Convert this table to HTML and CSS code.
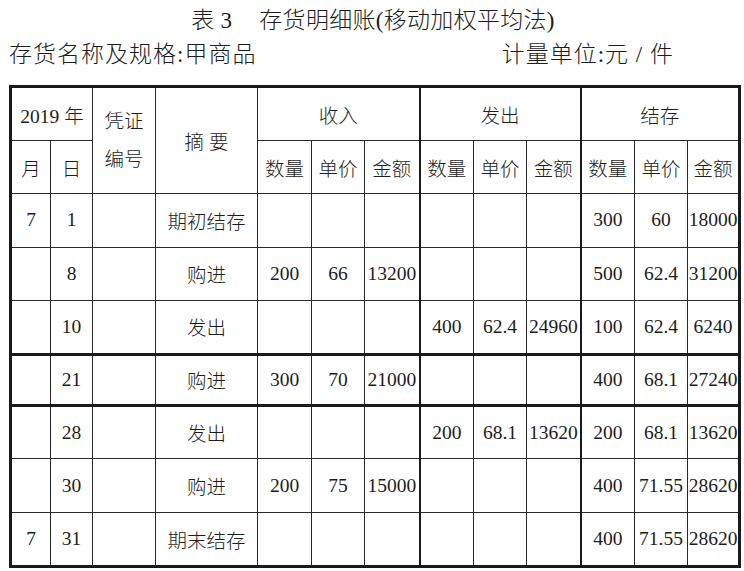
FILE: index.html
```html
<!DOCTYPE html>
<html lang="zh-CN">
<head>
<meta charset="utf-8">
<title>存货明细账</title>
<link rel="stylesheet" href="styles.css">
</head>
<body>
<div class="page">
  <h1 class="title"><span class="tno">表 3</span>存货明细账(移动加权平均法)</h1>
  <div class="info">
    <span>存货名称及规格:甲商品</span>
    <span>计量单位:元 / 件</span>
  </div>
  <table class="ledger">
    <colgroup>
      <col class="c-m"><col class="c-d"><col class="c-v"><col class="c-s">
      <col class="c-a1"><col class="c-a2"><col class="c-a3">
      <col class="c-b1"><col class="c-b2"><col class="c-b3">
      <col class="c-c1"><col class="c-c2"><col class="c-c3">
    </colgroup>
    <thead>
      <tr class="hr1">
        <th colspan="2">2019 年</th>
        <th rowspan="2" class="voucher">凭证<br>编号</th>
        <th rowspan="2">摘 要</th>
        <th colspan="3">收入</th>
        <th colspan="3" class="gl">发出</th>
        <th colspan="3" class="gl">结存</th>
      </tr>
      <tr class="hr2">
        <th>月</th><th>日</th>
        <th>数量</th><th>单价</th><th>金额</th>
        <th class="gl">数量</th><th>单价</th><th>金额</th>
        <th class="gl">数量</th><th>单价</th><th>金额</th>
      </tr>
    </thead>
    <tbody>
      <tr class="r1"><td>7</td><td>1</td><td></td><td>期初结存</td><td></td><td></td><td></td><td class="gl"></td><td></td><td></td><td class="gl">300</td><td>60</td><td>18000</td></tr>
      <tr class="r2"><td></td><td>8</td><td></td><td>购进</td><td>200</td><td>66</td><td>13200</td><td class="gl"></td><td></td><td></td><td class="gl">500</td><td>62.4</td><td>31200</td></tr>
      <tr class="r3"><td></td><td>10</td><td></td><td>发出</td><td></td><td></td><td></td><td class="gl">400</td><td>62.4</td><td>24960</td><td class="gl">100</td><td>62.4</td><td>6240</td></tr>
      <tr class="r4 sep"><td></td><td>21</td><td></td><td>购进</td><td>300</td><td>70</td><td>21000</td><td class="gl"></td><td></td><td></td><td class="gl">400</td><td>68.1</td><td>27240</td></tr>
      <tr class="r5 sep"><td></td><td>28</td><td></td><td>发出</td><td></td><td></td><td></td><td class="gl">200</td><td>68.1</td><td>13620</td><td class="gl">200</td><td>68.1</td><td>13620</td></tr>
      <tr class="r6"><td></td><td>30</td><td></td><td>购进</td><td>200</td><td>75</td><td>15000</td><td class="gl"></td><td></td><td></td><td class="gl">400</td><td>71.55</td><td>28620</td></tr>
      <tr class="r7"><td>7</td><td>31</td><td></td><td>期末结存</td><td></td><td></td><td></td><td class="gl"></td><td></td><td></td><td class="gl">400</td><td>71.55</td><td>28620</td></tr>
    </tbody>
  </table>
</div>
</body>
</html>
```

FILE: styles.css
```css
html, body {
  margin: 0;
  padding: 0;
  background: #ffffff;
}

body {
  font-family: "Liberation Serif", "Noto Sans CJK SC", serif;
  color: #1c1c1c;
}

.page {
  width: 744px;
  height: 571px;
  overflow: hidden;
}

.title {
  margin: 0;
  padding-top: 7px;
  height: 28px;
  line-height: 28px;
  font-size: 23px;
  font-weight: 300;
  text-align: center;
  padding-left: 2px;
  letter-spacing: 0.3px;
}

.tno {
  margin-right: 27px;
}

.info {
  display: flex;
  justify-content: space-between;
  margin-top: 6px;
  height: 28px;
  line-height: 28px;
  padding: 0 70px 0 9px;
  font-size: 23px;
  font-weight: 300;
  letter-spacing: 1px;
}

.ledger {
  margin: 16px 0 0 9px;
  border-collapse: collapse;
  table-layout: fixed;
  width: 729px;
  border: 3px solid #1a1a1a;
  font-size: 19.5px;
}

.c-m { width: 40px; }
.c-d { width: 42px; }
.c-v { width: 63px; }
.c-s { width: 102px; }
.c-a1 { width: 54px; }
.c-a2 { width: 53px; }
.c-a3 { width: 55px; }
.c-b1 { width: 54px; }
.c-b2 { width: 53px; }
.c-b3 { width: 54px; }
.c-c1 { width: 54px; }
.c-c2 { width: 53px; }
.c-c3 { width: 52px; }

.ledger th,
.ledger td {
  border: 1px solid #2a2a2a;
  padding: 0;
  text-align: center;
  vertical-align: middle;
  font-weight: 300;
  white-space: nowrap;
  overflow: hidden;
}

.ledger .gl {
  border-left: 2px solid #1a1a1a;
}

.hr1 { height: 54px; }
.hr2 { height: 53px; }

.r1, .r2, .r3 { height: 53.5px; }
.r4 { height: 51.5px; }
.r5 { height: 53px; }
.r6, .r7 { height: 54px; }

.ledger tbody tr.sep td {
  border-top: 3px solid #1a1a1a;
}

.voucher {
  line-height: 38px;
}
```
